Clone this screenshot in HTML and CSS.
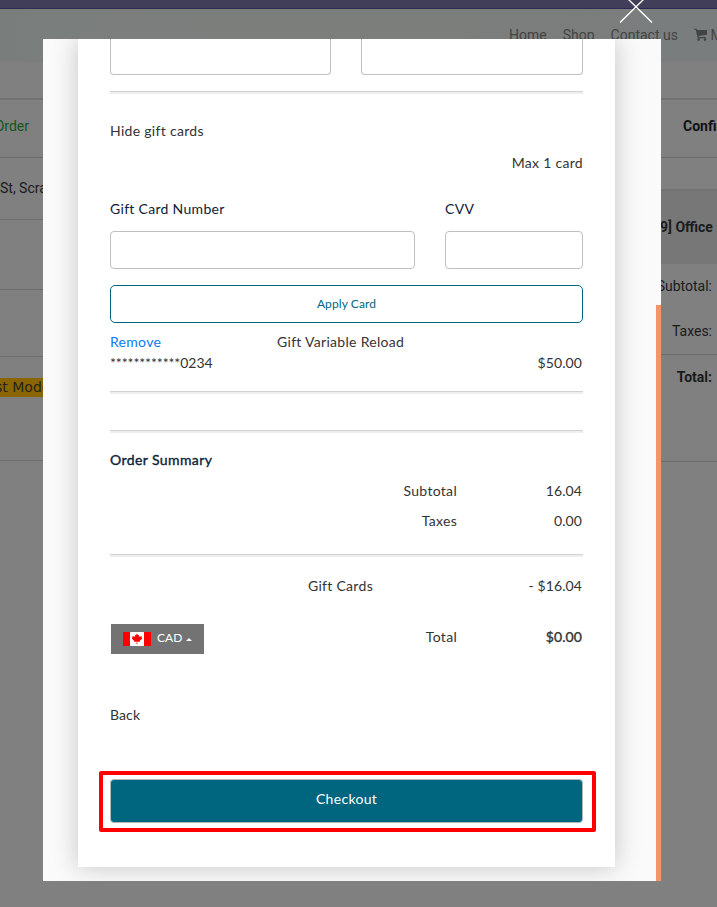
FILE: index.html
```html
<!DOCTYPE html>
<html lang="en">
<head>
<meta charset="utf-8">
<title>Checkout</title>
<link rel="stylesheet" href="styles.css">
</head>
<body>
<div class="page">
  <div class="topbar"></div>
  <header class="site-header">
    <nav class="nav">
      <span>Home</span><span>Shop</span><span>Contact us</span>
      <span class="cart"><svg width="13" height="13" viewBox="0 0 13 13"><path d="M0 .7h2.6l.4 1.3h10v4.8L4.5 8l.2 1.1h7.2v1.1H3.7L1.8 1.8H0z" fill="currentColor"/><circle cx="4.6" cy="11.6" r="1.3" fill="currentColor"/><circle cx="11" cy="11.6" r="1.3" fill="currentColor"/></svg> My cart</span>
    </nav>
  </header>
  <div class="columns">
    <div class="steps">
      <div class="step-gap"></div>
      <div class="step step-title"><span>Order</span></div>
      <div class="step step-address"><span>St, Scranton</span></div>
      <div class="step step-a"></div>
      <div class="step step-b"></div>
      <div class="step step-mode"><mark>st Mode</mark></div>
    </div>
    <div class="totals">
      <div class="step-gap"></div>
      <div class="step step-title confirm"><span>Confirm</span></div>
      <div class="blank"></div>
      <div class="product"><span>9] Office G</span></div>
      <div class="sum">Subtotal:</div>
      <div class="sum">Taxes:</div>
      <div class="grand">Total:</div>
    </div>
  </div>
</div>

<svg class="close" width="34" height="24" viewBox="0 0 34 24"><path d="M1 22.5 25 -1M33 22.5 9 -1" stroke="#fff" stroke-width="1.4"/></svg>

<div class="modal">
  <main class="card">
    <div class="fields top-fields"><div class="input"></div><div class="input"></div></div>
    <div class="rule"></div>
    <div class="line hide"><span>Hide gift cards</span></div>
    <div class="line end"><span class="max">Max 1 card</span></div>
    <div class="fields gift labels"><span>Gift Card Number</span><span>CVV</span></div>
    <div class="fields gift"><div class="input"></div><div class="input"></div></div>
    <div class="apply">Apply Card</div>
    <div class="applied"><a class="remove">Remove</a><span class="reload">Gift Variable Reload</span></div>
    <div class="applied second"><span class="masked"><span class="stars">************</span>0234</span><span class="num">$50.00</span></div>
    <div class="rule r2"></div>
    <div class="rule r3"></div>
    <div class="line summary"><span>Order Summary</span></div>
    <div class="amount"><span>Subtotal</span><span class="num">16.04</span></div>
    <div class="amount"><span>Taxes</span><span class="num">0.00</span></div>
    <div class="rule r4"></div>
    <div class="amount cards"><span>Gift Cards</span><span class="num">- $16.04</span></div>
    <div class="total">
      <div class="currency">
        <svg width="28" height="14" viewBox="0 0 28 14"><path fill="#fff" d="M0 0h28v14H0z"/><path fill="#f00" d="M0 0h7v14H0zM21 0h7v14h-7zM14 1.5l1.1 1.7 1-.5-.3 2.3 1.4-1 .4.8 1.5-.2-.5 1.5.7.5-2.7 2.3.3 1-2.6-.4.1 2.8h-.8l.1-2.8-2.6.4.3-1-2.7-2.3.7-.5-.5-1.5 1.5.2.4-.8 1.4 1-.3-2.3 1 .5z"/></svg>
        <span>CAD</span>
        <i class="caret"></i>
      </div>
      <span class="total-label">Total</span><span class="num strong">$0.00</span>
    </div>
    <div class="line back"><span>Back</span></div>
    <div class="checkout">Checkout<div class="highlight"></div></div>
  </main>
  <div class="scrollbar"></div>
</div>
</body>
</html>
```
FILE: styles.css
```css
* { box-sizing: border-box; }
body { margin: 0; height: 907px; overflow: hidden; background: #808080; font: 14px Roboto, sans-serif; color: #191b1d; }

.topbar { height: 9px; background: #403e59; border-bottom: 1px solid #2c2b55; }
.site-header { height: 53px; background: linear-gradient(90deg, #797e7d, #7c7e7c 30%, #7c7e7c 65%, #797d7d); overflow: hidden; }
.nav { display: flex; gap: 16px; margin: 17px 0 0 509px; width: 300px; color: #434444; line-height: 18px; white-space: nowrap; }
.cart svg { vertical-align: -1px; }
.columns { display: flex; justify-content: space-between; }
.steps { width: 43px; }
.totals { width: 56px; }
.steps, .totals { overflow: hidden; white-space: nowrap; }
.step-gap { height: 38px; border-bottom: 2px solid #727272; }
.step { border-bottom: 1px solid #6d6d6d; display: flex; align-items: center; }
.step-title { height: 58px; padding-bottom: 6px; color: #155523; }
.steps .step-title { justify-content: flex-end; padding-right: 14px; }
.confirm { padding-left: 22px; color: #101214; font-weight: 700; }
.step-address { height: 62px; padding-bottom: 2px; }
.step-a { height: 70px; }
.step-b { height: 67px; }
.step-mode { height: 104px; align-items: flex-start; padding-top: 21px; }
.step-mode mark { flex: none; width: 80px; height: 19px; line-height: 19px; background: #8b6500; color: #25241e; font-family: "DejaVu Sans", sans-serif; margin-left: -5px; }
.blank { height: 33px; border-bottom: 2px solid #727272; }
.product { height: 73px; background: #777; line-height: 73px; font-weight: 700; }
.product span { margin-left: -1px; }
.sum { height: 45px; line-height: 45px; display: flex; justify-content: flex-end; padding-right: 5px; }
.grand { height: 108px; padding: 13px 5px 0 0; line-height: 18px; text-align: right; font-weight: 700; border: solid #6d6d6d; border-width: 1px 0; }

.close { position: absolute; left: 619px; top: 0; }
.modal { position: absolute; left: 43px; top: 39px; width: 618px; height: 842px; padding-left: 35px; background: #fafafa; overflow: hidden; }
.scrollbar { position: absolute; right: 0; top: 266px; bottom: 0; width: 5px; background: #f69469; }
.card { width: 537px; height: 828px; padding: 0 32px; background: #fff; box-shadow: 0 0 24px rgba(0,0,0,.22); display: flex; flex-direction: column; font: 14px Lato, sans-serif; letter-spacing: .3px; color: #333; }
.card > * { flex: none; }
.fields { display: grid; grid-template-columns: 221px 222px; column-gap: 30px; }
.gift { grid-template-columns: 305px 138px; }
.input { height: 38px; border: 1px solid #bfbfbf; border-radius: 4px; }
.top-fields .input { height: 36px; border-top: 0; border-radius: 0 0 4px 4px; }
.rule { height: 3px; margin-top: 16px; background: #eee; border-top: 1px solid #d2d2d2; }
.line { height: 32px; padding-bottom: 2px; display: flex; align-items: center; }
.hide { margin-top: 21px; }
.end { justify-content: flex-end; }
.labels { height: 32px; padding-bottom: 2px; margin: 14px 0 6px; align-items: center; color: #0b2239; }
.apply { height: 38px; margin-top: 16px; border: 1px solid #00667f; border-radius: 5px; color: #00667f; font-size: 12px; line-height: 36px; text-align: center; letter-spacing: .1px; }
.applied { height: 21px; padding-bottom: 2px; margin-top: 9px; display: grid; grid-template-columns: 167px 1fr; align-items: center; }
.second { margin: 0; }
.masked { letter-spacing: 0; }
.stars { letter-spacing: -.1px; }
.remove { color: #087cf5; }
.num { text-align: right; letter-spacing: .1px; padding-right: 1px; }
.r2 { margin-top: 17px; }
.r3 { margin-top: 36px; }
.summary { height: 30px; margin: 12px 0 1px; color: #0b2239; letter-spacing: .4px; -webkit-text-stroke: .35px; }
.amount { height: 30px; padding-bottom: 2px; display: grid; grid-template-columns: 347px 126px; align-items: center; }
.amount > :first-child { text-align: right; }
.r4 { margin-top: 18px; }
.cards { grid-template-columns: 263px 210px; margin-top: 14px; }
.total { height: 30px; margin-top: 23px; display: grid; grid-template-columns: 94px 253px 126px; line-height: 26px; }
.currency { width: 93px; height: 30px; margin-left: 1px; padding-left: 12px; display: flex; align-items: center; background: #737373; color: #fff; font-size: 12px; letter-spacing: 0; }
.currency span { margin: 0 0 2px 6px; }
.caret { margin-left: 4px; border: solid transparent; border-width: 0 3px 3px; border-bottom-color: #fff; }
.total-label { text-align: right; }
.strong { -webkit-text-stroke: .35px; }
.back { height: 30px; margin-top: 46px; letter-spacing: .1px; }
.checkout { position: relative; height: 44px; margin-top: 49px; border: 1px solid #b0b8ba; border-radius: 4px; background: #00667f; color: #fff; line-height: 38px; text-align: center; }
.highlight { position: absolute; inset: -9px -14px -10px -12px; border: 4px solid #f00; border-radius: 2px; }
```
